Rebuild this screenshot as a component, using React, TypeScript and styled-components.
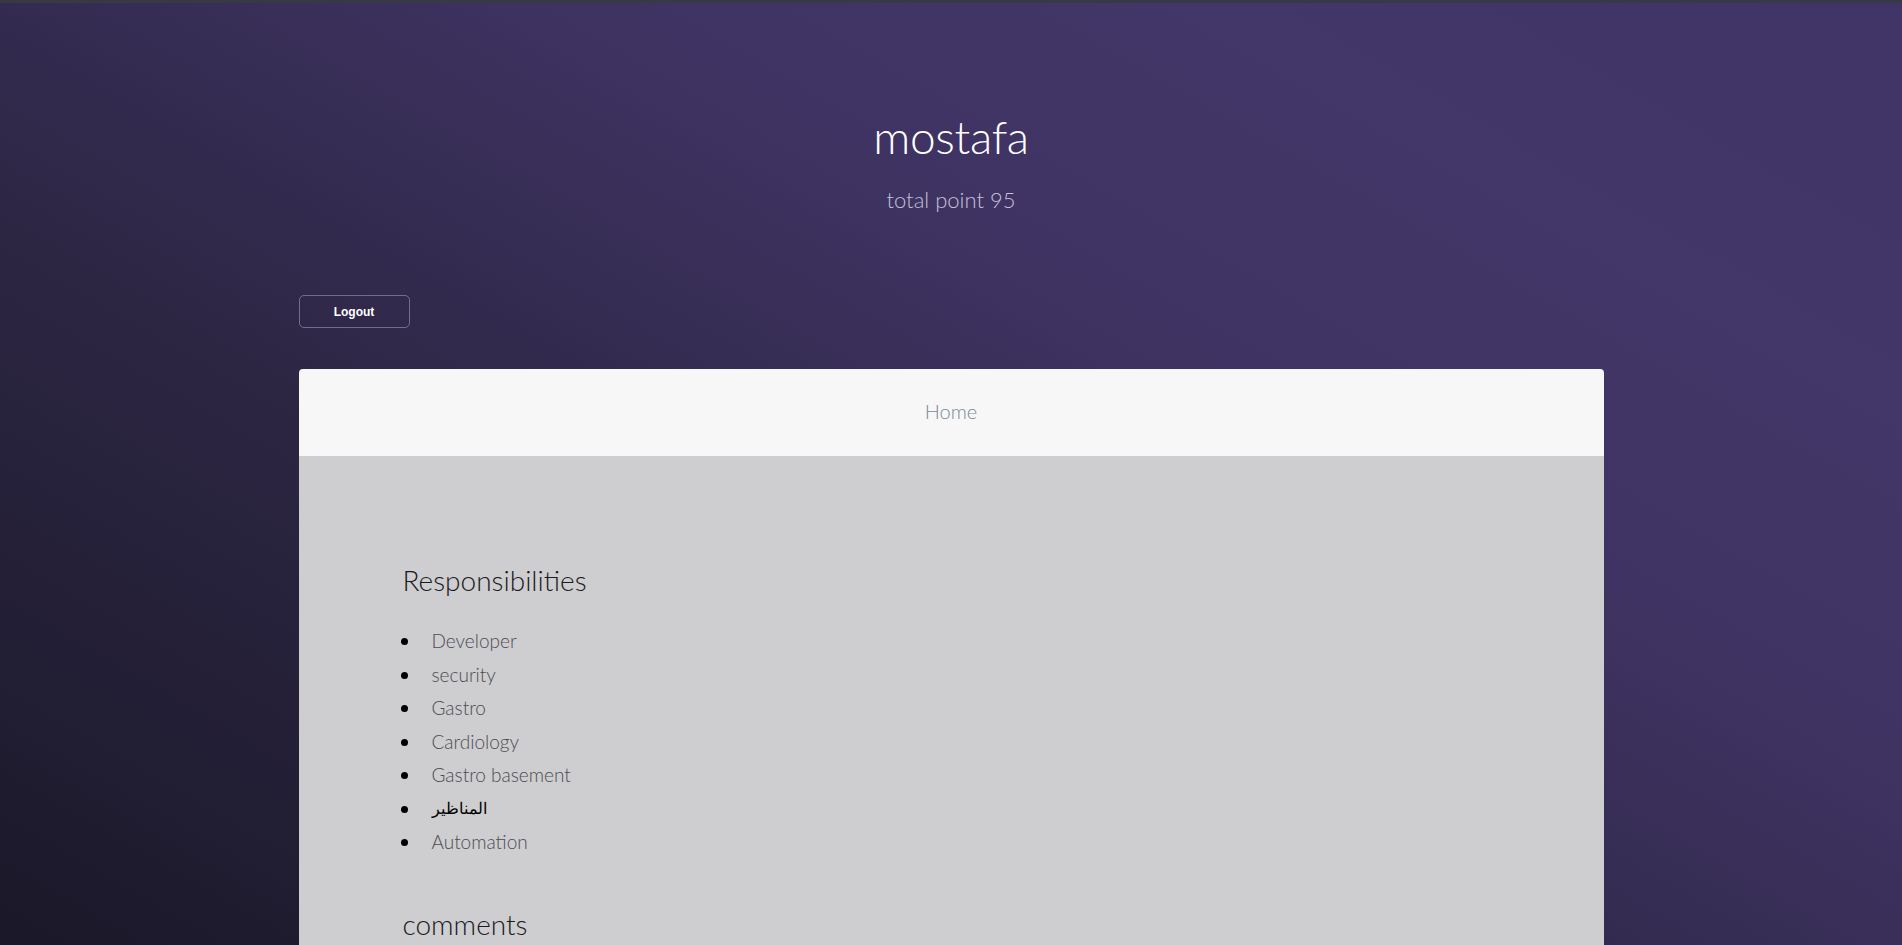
import React from "react";
import styled, { createGlobalStyle } from "styled-components";

const GlobalStyle = createGlobalStyle`
  html, body {
    margin: 0;
    padding: 0;
  }
  body {
    font-family: "Lato", "Open Sans", "Noto Sans", sans-serif;
    min-height: 100vh;
    background: linear-gradient(30deg, #1b1829 0%, #2c2643 35%, #3d3260 60%, #433769 80%, #3f3465 100%) fixed;
    border-top: 3px solid #373a44;
  }
`;

const Page = styled.div`
  display: flex;
  flex-direction: column;
  align-items: center;
  min-height: 100vh;
`;

const Hero = styled.header`
  display: flex;
  flex-direction: column;
  align-items: center;
  padding-top: 109px;
`;

const Title = styled.h1`
  margin: 0;
  font-size: 46px;
  line-height: 50px;
  font-weight: 300;
  color: #ffffff;
  letter-spacing: -0.3px;
`;

const Subtitle = styled.p`
  margin: 24px 0 0;
  font-size: 22px;
  line-height: 28px;
  font-weight: 300;
  color: #c6c0dc;
`;

const Toolbar = styled.div`
  width: 1305px;
  margin-top: 81px;
  display: flex;
`;

const LogoutButton = styled.button`
  width: 111px;
  height: 33px;
  border: 1px solid rgba(255, 255, 255, 0.32);
  border-radius: 5px;
  background: transparent;
  color: #ffffff;
  font-family: "Liberation Sans", Arial, sans-serif;
  font-weight: 700;
  font-size: 12px;
  cursor: pointer;
`;

const Card = styled.section`
  width: 1305px;
  margin-top: 41px;
  border-radius: 4px 4px 0 0;
  overflow: hidden;
`;

const CardHeader = styled.nav`
  height: 87px;
  box-sizing: border-box;
  padding-bottom: 4px;
  background: #f7f7f7;
  display: flex;
  align-items: center;
  justify-content: center;
`;

const NavLink = styled.a`
  font-size: 20px;
  font-weight: 300;
  color: #7b8898;
  text-decoration: none;
`;

const CardBody = styled.div`
  background: #cecdcf;
  padding: 106px 104px 40px;
`;

const SectionTitle = styled.h2<{ $gap: number }>`
  margin: ${(p) => p.$gap}px 0 0;
  font-size: 28px;
  line-height: 36px;
  font-weight: 300;
  color: #1a1a1e;
`;

const List = styled.ul`
  margin: 26px 0 0;
  padding: 0;
  list-style: none;
`;

const Item = styled.li<{ $rtl?: boolean }>`
  display: flex;
  align-items: center;
  height: 33.5px;
  font-weight: 300;
  color: ${(p) => (p.$rtl ? "#000000" : "#4c4c52")};
  font-family: ${(p) =>
    p.$rtl ? `"DejaVu Sans", "Noto Sans", sans-serif` : `"Lato", "Open Sans", sans-serif`};
  font-size: ${(p) => (p.$rtl ? "16px" : "19px")};
  &::before {
    content: "";
    flex: none;
    width: 7px;
    height: 7px;
    border-radius: 50%;
    background: #000000;
    margin: 2px 24px 0 -2px;
  }
`;

const responsibilities = [
  "Developer",
  "security",
  "Gastro",
  "Cardiology",
  "Gastro basement",
  "المناظير",
  "Automation",
];

export default function App() {
  return (
    <>
      <GlobalStyle />
      <Page>
        <Hero>
          <Title>mostafa</Title>
          <Subtitle>total point 95</Subtitle>
        </Hero>
        <Toolbar>
          <LogoutButton>Logout</LogoutButton>
        </Toolbar>
        <Card>
          <CardHeader>
            <NavLink href="#">Home</NavLink>
          </CardHeader>
          <CardBody>
            <SectionTitle $gap={0}>Responsibilities</SectionTitle>
            <List>
              {responsibilities.map((r) => (
                <Item key={r} $rtl={/[\u0600-\u06FF]/.test(r)}>
                  {r}
                </Item>
              ))}
            </List>
            <SectionTitle $gap={47}>comments</SectionTitle>
          </CardBody>
        </Card>
      </Page>
    </>
  );
}
